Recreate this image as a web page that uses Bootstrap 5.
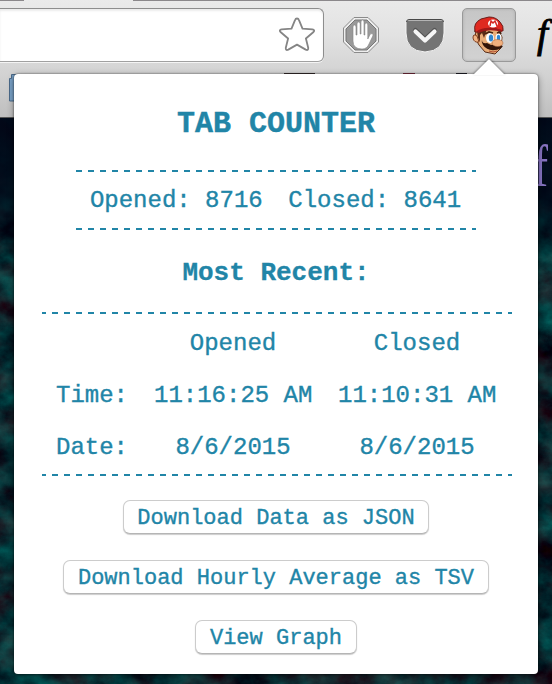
<!DOCTYPE html>
<html lang="en">
<head>
<meta charset="utf-8">
<title>Tab Counter</title>
<link rel="stylesheet" href="https://cdn.jsdelivr.net/npm/bootstrap@5.3.0/dist/css/bootstrap.min.css">
<style>
  body { width: 552px; height: 684px; background: #001a26; font-family: "Courier New", "Liberation Mono", monospace; }
  .browser-bar { height: 118px; background: linear-gradient(#eaeaea 0, #e2e2e2 35px, #d0d0d0 80px, #bfbfbf 117px); border-bottom: 1px solid #555; }
  .tab-edge { height: 1px; }
  .tab-edge span { background: #8b888b; }
  .toolbar-row { height: 73px; }
  .omnibox { width: 324px; height: 54px; margin-top: 7px; padding-right: 8px; background: #fff; border: 1px solid #8d8d8d; border-left: 0; border-bottom-color: #a0a0a0; border-radius: 0 6px 6px 0; box-shadow: inset 0 2px 2px #ececec, 0 1px #f4f4f4; }
  .tool-active { width: 54px; height: 54px; margin: 7px 0 0 17px; background: linear-gradient(#c6c6c6, #d2d2d2); border: 1px solid #999; border-radius: 5px; box-shadow: inset 0 0 3px #aaa; }
  .italic-f { margin: -2px 0 0 21px; font: italic 39px/70px "Liberation Serif", serif; color: #000; width: 14px; -webkit-text-stroke: .9px #000; }
  .bookmark-folder { margin: -1px 0 0 8px; display: block; }
  .page-area { height: 566px; }
  .page-area svg { display: block; }
  .popup { left: 14px; top: 74px; width: 524px; height: 600px; padding-top: 32px; color: #2185a7; background: #fff; border-radius: 4px; box-shadow: 0 0 2px rgba(0,0,0,.65), 0 2px 7px rgba(0,0,0,.4); font-size: 24px; }
  .popup-arrow { left: 458px; top: -16px; filter: drop-shadow(0 -1px 1px rgba(0,0,0,.4)); }
  .popup-title { font-size: 30px; line-height: 36px; margin-bottom: 28px; font-weight: 700; -webkit-text-stroke: .4px #2185a7; }
  .popup-subtitle { font-size: 26px; line-height: 32px; margin: 27px 0 23px; font-weight: 700; -webkit-text-stroke: .3px #2185a7; }
  .dash-rule { height: 2px; background: repeating-linear-gradient(90deg, #2185a7 0 6px, transparent 6px 12px); }
  .totals { width: 400px; }
  .totals-row { height: 56px; gap: 25.6px; padding-top: 2px; margin-left: -1px; }
  .totals-row, .recent-grid { -webkit-text-stroke: .35px #2185a7; }
  .recent { width: 470px; margin-left: 2px; }
  .recent .dash-rule { background: repeating-linear-gradient(90deg, #2185a7 0 4px, transparent 4px 10px, #2185a7 10px 12px); }
  .recent-grid { display: grid; grid-template-columns: 72px 158px 158px; column-gap: 26px; row-gap: 16px; align-content: start; height: 160px; padding: 12px 0 0 14px; line-height: 36px; white-space: nowrap; }
  .download-list { margin-top: 24px; gap: 26px; }
  .btn-popup { height: 34px; padding: 2px 14px 0; font-size: 22px; line-height: 31px; color: #2185a7; background: #fff; border: 1px solid #ccc; border-bottom-color: #b5b5b5; border-radius: 7px; box-shadow: 0 1px 1px #ccc; -webkit-text-stroke: .35px #2185a7; white-space: nowrap; }
  .btn-popup:first-child { padding-left: 13.500px; padding-right: 13.500px; }
</style>
<script src="https://cdn.jsdelivr.net/npm/bootstrap@5.3.0/dist/js/bootstrap.bundle.min.js"></script>
</head>
<body class="position-relative overflow-hidden m-0">
  <header class="browser-bar">
    <div class="tab-edge d-flex justify-content-between"><span style="width:24px"></span><span style="width:419px"></span></div>
    <div class="toolbar-row d-flex align-items-start">
      <div class="omnibox d-flex align-items-center justify-content-end flex-shrink-0">
        <svg width="36" height="36" viewBox="0 0 36 36"><path d="M18 1.500q1.400 0 2 1.600l3.500 8.600 9.800.7q3.200.6.900 2.900l-7.300 6.200 2.300 9.200q.3 3.200-2.500 1.900L18 27.600l-8.700 5q-2.800 1.300-2.500-1.900l2.300-9.200-7.300-6.200q-2.300-2.300.9-2.900l9.800-.7L16 3.100q.6-1.600 2-1.600z" fill="#fff" stroke="#858585" stroke-width="1.800" stroke-linejoin="round"/></svg>
      </div>
      <svg class="flex-shrink-0" width="38" height="38" viewBox="0 0 38 38" style="margin:15px 0 0 18px">
        <path d="M12 1.500h14L36.500 12v14L26 36.500H12L1.500 26V12z" fill="#eee" stroke="#8b8b8b"/>
        <path d="M13 4h12l9 9v12l-9 9H13l-9-9V13z" fill="#999" stroke="#777"/>
        <path d="M11 25V11q0-2 1.500-2T14 11v8h1V8q0-2 1.600-2t1.600 2v10h.8V6q0-2 1.500-2T22 6v13h.8V9q0-2 1.500-2t1.500 2v14l2-4q1-2 2.500-1.200 1.200.7.500 2.200L27 28q-2 5-7 5-9 0-9-8z" fill="#fff" stroke="#858585" stroke-width=".6"/>
      </svg>
      <svg class="flex-shrink-0" width="40" height="36" viewBox="0 0 40 36" style="margin:17px 0 0 25px">
        <path d="M1 4q0-2 2-2h34q2 0 2 2v11q0 18-19 19Q1 33 1 15z" fill="#747474" stroke="#f3f3f3"/>
        <path d="M1.500 4q0-2.500 2.500-2.500h32q2.500 0 2.500 2.500" fill="none" stroke="#484848"/>
        <path d="M10.500 12.500L20 21.500l9.500-9" fill="none" stroke="#555" stroke-width="5" stroke-linecap="round" stroke-linejoin="round"/>
        <path d="M10.500 13.500L20 22.500l9.500-9" fill="none" stroke="#f6f6f6" stroke-width="4.200" stroke-linecap="round" stroke-linejoin="round"/>
      </svg>
      <div class="tool-active flex-shrink-0">
        <svg class="d-block" width="52" height="52" viewBox="0 0 52 52">
          <path d="M13 22l-1 7 4 7 6 7 10 2 6-6 1-11-5-9-15 1z" fill="#e9ad77" stroke="#5a2d18"/>
          <path d="M14 22l-3 1 1-3 6-2 6 2-3 9-2-5-2 2v7l-2-4z" fill="#5b2b17"/>
          <path d="M14 27q-4-3-4 2 1 5 6 4z" fill="#f0b485" stroke="#834222"/>
          <path d="M12 22q-2-8 6-12l8-2q7 0 11 5 4 4 3 9-9-4-18-2l-8 3q-2 1-2-1z" fill="#df2920" stroke="#6b1c18"/>
          <path d="M14 22q10-6 25-1v2q-13-4-24 1z" fill="#a01817"/>
          <ellipse cx="30" cy="14.500" rx="5" ry="4" fill="#fff"/>
          <path d="M27 17l1-5 2 2 2-2 2 5" fill="none" stroke="#d62820" stroke-width="1.500"/>
          <ellipse cx="27" cy="29" rx="4" ry="5" fill="#fff"/><ellipse cx="35.500" cy="29" rx="3" ry="4.500" fill="#fff"/>
          <ellipse cx="28" cy="29" rx="2.200" ry="3.500" fill="#3187d0"/><ellipse cx="35.500" cy="29" rx="1.700" ry="3.300" fill="#3187d0"/>
          <path d="M22 25l4-2 4 1m4 0l3-1 1 2" fill="none" stroke="#47220f" stroke-width="1.700"/>
          <path d="M19 31q0 4 5 3 4 3 12 2l4 1q-3 4-8 4-8 1-12-5-2-3-1-5z" fill="#321509"/>
          <ellipse cx="34.500" cy="34" rx="5.500" ry="3.500" fill="#f0af7d" stroke="#a25e38" stroke-width=".5"/>
          <path d="M26 42q4 2 8 0" stroke="#b04d31" fill="none"/>
        </svg>
      </div>
      <div class="italic-f flex-shrink-0">f</div>
    </div>
    <svg class="bookmark-folder" width="500" height="30" viewBox="0 0 500 30">
      <path d="M1.500 28V5.500h2v-4H18V28z" fill="#79a1c7" stroke="#4a6a8a"/>
      <path d="M276 0h31v1h-31z" fill="#342b2b"/><path d="M395 0h12v1h-12z" fill="#762b3c"/><path d="M448 0h11v1h-11z" fill="#20202a"/>
    </svg>
  </header>
  <main class="page-area">
    <svg width="552" height="566" viewBox="0 0 552 566">
      <defs>
        <filter id="rock" x="0" y="0" width="100%" height="100%" color-interpolation-filters="sRGB"><feTurbulence type="fractalNoise" baseFrequency=".03 .04" numOctaves="5" seed="12"/><feColorMatrix values=".3 0 0 0 -.1  0 .6 0 0 -.13  0 .5 0 0 -.06  0 0 0 0 1"/></filter>
        <linearGradient id="depth" x2="0" y2="1"><stop offset="0" stop-color="#000818" stop-opacity=".93"/><stop offset=".14" stop-color="#000818" stop-opacity=".85"/><stop offset=".24" stop-color="#000818" stop-opacity=".1"/></linearGradient>
      </defs>
      <rect width="552" height="566" filter="url(#rock)"/>
      <rect width="552" height="566" fill="url(#depth)"/>
      <text x="534" y="68" font-family="Liberation Serif, serif" font-size="60" textLength="14" lengthAdjust="spacingAndGlyphs" fill="#8874c2">f</text>
    </svg>
  </main>
  <section class="popup position-absolute d-flex flex-column align-items-center">
    <svg class="popup-arrow position-absolute" width="34" height="17" viewBox="0 0 34 17"><path d="M1 17L17 1l16 16z" fill="#fff"/></svg>
    <h1 class="popup-title">TAB COUNTER</h1>
    <div class="totals">
      <div class="dash-rule"></div>
      <div class="totals-row d-flex align-items-center justify-content-center text-nowrap"><span>Opened: 8716</span><span>Closed: 8641</span></div>
      <div class="dash-rule"></div>
    </div>
    <h2 class="popup-subtitle">Most Recent:</h2>
    <div class="recent">
      <div class="dash-rule"></div>
      <div class="recent-grid text-center">
        <span></span><span>Opened</span><span>Closed</span>
        <span>Time:</span><span>11:16:25 AM</span><span>11:10:31 AM</span>
        <span>Date:</span><span>8/6/2015</span><span>8/6/2015</span>
      </div>
      <div class="dash-rule"></div>
    </div>
    <div class="download-list d-flex flex-column align-items-center">
      <button type="button" class="btn btn-popup">Download Data as JSON</button>
      <button type="button" class="btn btn-popup">Download Hourly Average as TSV</button>
      <button type="button" class="btn btn-popup">View Graph</button>
    </div>
  </section>
</body>
</html>
